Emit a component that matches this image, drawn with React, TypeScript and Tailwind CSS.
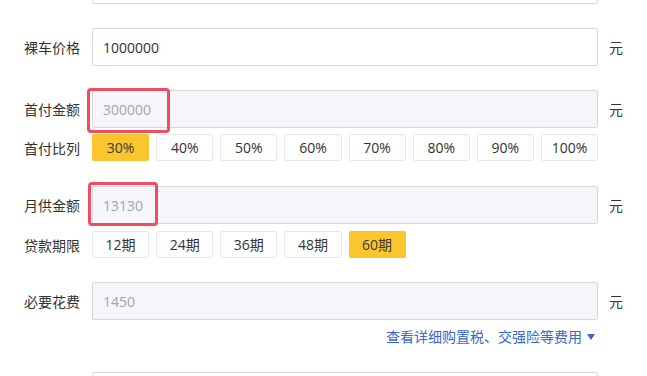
import React from "react";

const font = { fontFamily: '"Noto Sans CJK SC", "Noto Sans", sans-serif' };
const numFont = { fontFamily: '"Open Sans", "Noto Sans CJK SC", sans-serif' };

function Label({ children }: { children: React.ReactNode }) {
  return (
    <div className="w-[92px] shrink-0 pl-[24px] text-[14px] leading-none text-[#333]">
      {children}
    </div>
  );
}

function Input({
  value,
  readOnly,
  highlight,
}: {
  value: string;
  readOnly?: boolean;
  highlight?: "a" | "b";
}) {
  return (
    <div
      style={numFont}
      className={
        "relative w-[506px] h-[38px] shrink-0 rounded-[2px] border flex items-center pl-[10px] text-[14px] " +
        (readOnly
          ? "bg-[#f5f6fa] border-[#d6d8de] text-[#a3a5ab]"
          : "bg-white border-[#d9d9d9] text-[#333]")
      }
    >
      {value}
      {highlight === "a" && (
        <div className="absolute left-[-6px] top-[-3px] w-[83px] h-[45px] rounded-[4px] border-[3px] border-[#f24d5e]" />
      )}
      {highlight === "b" && (
        <div className="absolute left-[-5px] top-[-5px] w-[70px] h-[44px] rounded-[4px] border-[3px] border-[#f24d5e]" />
      )}
    </div>
  );
}

function Unit() {
  return <div className="ml-[11px] text-[14px] text-[#333]">元</div>;
}

function Chip({ label, active }: { label: string; active?: boolean }) {
  return (
    <div
      style={numFont}
      className={
        "h-[27px] flex items-center justify-center rounded-[2px] text-[14px] " +
        (active
          ? "bg-[#fbc52e] text-[#3a3a3a]"
          : "bg-white border border-[#e8e8e8] text-[#333]")
      }
    >
      {label}
    </div>
  );
}

export default function App() {
  const pcts = ["30%", "40%", "50%", "60%", "70%", "80%", "90%", "100%"];
  const terms = ["12期", "24期", "36期", "48期", "60期"];
  return (
    <div
      className="w-[647px] h-[376px] overflow-hidden bg-white relative"
      style={font}
    >
      {/* partially visible previous input */}
      <div className="flex">
        <div className="w-[92px] shrink-0" />
        <div className="w-[506px] h-[38px] mt-[-34px] rounded-[2px] border border-[#d9d9d9] bg-white" />
      </div>

      <div className="flex items-center mt-[24px]">
        <Label>裸车价格</Label>
        <Input value="1000000" />
        <Unit />
      </div>

      <div className="flex items-center mt-[24px]">
        <Label>首付金额</Label>
        <Input value="300000" readOnly highlight="a" />
        <Unit />
      </div>

      <div className="flex items-center mt-[6px]">
        <Label>首付比列</Label>
        <div className="w-[506px] grid grid-cols-8 gap-[7px]">
          {pcts.map((p, i) => (
            <Chip key={p} label={p} active={i === 0} />
          ))}
        </div>
      </div>

      <div className="flex items-center mt-[25px]">
        <Label>月供金额</Label>
        <Input value="13130" readOnly highlight="b" />
        <Unit />
      </div>

      <div className="flex items-center mt-[7px]">
        <Label>贷款期限</Label>
        <div className="w-[506px] grid grid-cols-8 gap-[7px]">
          {terms.map((t, i) => (
            <Chip key={t} label={t} active={i === 4} />
          ))}
        </div>
      </div>

      <div className="flex items-center mt-[24px]">
        <Label>必要花费</Label>
        <Input value="1450" readOnly />
        <Unit />
      </div>

      <div className="flex">
        <div className="w-[598px] flex justify-end items-center mt-[8px] h-[17px] text-[14px] text-[#3467cf]">
          <span>查看详细购置税、交强险等费用</span>
          <svg width="8" height="6" viewBox="0 0 8 6" className="ml-[5px] mr-[3px]">
            <path d="M0 0 L8 0 L4 6 Z" fill="#3467cf" />
          </svg>
        </div>
      </div>

      <div className="flex mt-[27px]">
        <div className="w-[92px] shrink-0" />
        <div className="w-[506px] h-[38px] rounded-[2px] border border-[#d9d9d9] bg-white" />
      </div>
    </div>
  );
}
